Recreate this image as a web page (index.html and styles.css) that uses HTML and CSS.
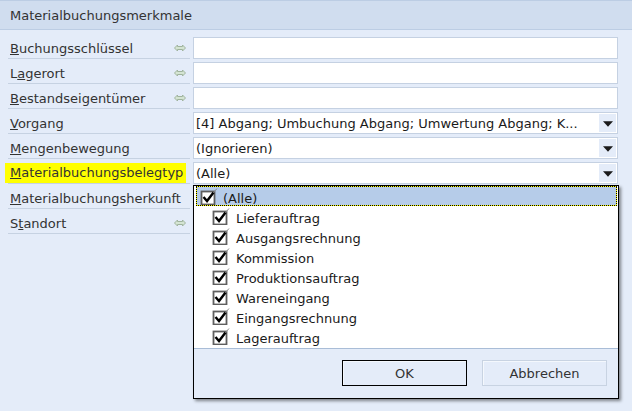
FILE: index.html
```html
<!DOCTYPE html>
<html lang="de">
<head>
<meta charset="utf-8">
<link rel="stylesheet" href="styles.css">
</head>
<body>
<div class="panel">
  <div class="header">Materialbuchungsmerkmale</div>
  <div class="form">
    <div class="lbl"><span><u>B</u>uchungsschlüssel</span><svg class="link" width="12" height="8" viewBox="0 0 12 8"><path d="M0.5 4 L3.5 1 L3.5 2.5 L8.5 2.5 L8.5 1 L11.5 4 L8.5 7 L8.5 5.5 L3.5 5.5 L3.5 7 Z" fill="#d4e4d2" stroke="#9fb39d" stroke-width="1"/></svg></div>
    <div class="field"></div>

    <div class="lbl"><span>L<u>a</u>gerort</span><svg class="link" width="12" height="8" viewBox="0 0 12 8"><path d="M0.5 4 L3.5 1 L3.5 2.5 L8.5 2.5 L8.5 1 L11.5 4 L8.5 7 L8.5 5.5 L3.5 5.5 L3.5 7 Z" fill="#d4e4d2" stroke="#9fb39d" stroke-width="1"/></svg></div>
    <div class="field"></div>

    <div class="lbl"><span><u>B</u>estandseigentümer</span><svg class="link" width="12" height="8" viewBox="0 0 12 8"><path d="M0.5 4 L3.5 1 L3.5 2.5 L8.5 2.5 L8.5 1 L11.5 4 L8.5 7 L8.5 5.5 L3.5 5.5 L3.5 7 Z" fill="#d4e4d2" stroke="#9fb39d" stroke-width="1"/></svg></div>
    <div class="field"></div>

    <div class="lbl"><span><u>V</u>organg</span></div>
    <div class="field select"><span class="val">[4] Abgang; Umbuchung Abgang; Umwertung Abgang; K...</span><span class="drop"><svg width="9" height="5" viewBox="0 0 9 5"><path d="M0 0 H9 L4.5 5 Z" fill="#1a1a1a"/></svg></span></div>

    <div class="lbl"><span><u>M</u>engenbewegung</span></div>
    <div class="field select"><span class="val">(Ignorieren)</span><span class="drop"><svg width="9" height="5" viewBox="0 0 9 5"><path d="M0 0 H9 L4.5 5 Z" fill="#1a1a1a"/></svg></span></div>

    <div class="lbl"><span class="hl"><u>M</u>aterialbuchungsbelegtyp</span></div>
    <div class="field select"><span class="val">(Alle)</span><span class="drop"><svg width="9" height="5" viewBox="0 0 9 5"><path d="M0 0 H9 L4.5 5 Z" fill="#1a1a1a"/></svg></span></div>

    <div class="lbl"><span><u>M</u>aterialbuchungsherkunft</span></div>
    <div class="field select"></div>

    <div class="lbl"><span>S<u>t</u>andort</span><svg class="link" width="12" height="8" viewBox="0 0 12 8"><path d="M0.5 4 L3.5 1 L3.5 2.5 L8.5 2.5 L8.5 1 L11.5 4 L8.5 7 L8.5 5.5 L3.5 5.5 L3.5 7 Z" fill="#d4e4d2" stroke="#9fb39d" stroke-width="1"/></svg></div>
    <div class="field"></div>
  </div>

  <div class="popup">
    <div class="list">
      <div class="item all"><svg class="cb" width="18" height="17" viewBox="0 0 18 17"><rect x="1.5" y="3.5" width="13" height="13" fill="#fff" stroke="#5e5e5e" stroke-width="1.8"/><path d="M3.5 9 L7 13 L13.5 4.5" fill="none" stroke="#000" stroke-width="2.4"/><path d="M13.5 4.5 L17 0.5" fill="none" stroke="#8a8a8a" stroke-width="1"/></svg><span>(Alle)</span></div>
      <div class="item"><svg class="cb" width="18" height="17" viewBox="0 0 18 17"><rect x="1.5" y="3.5" width="13" height="13" fill="#fff" stroke="#5e5e5e" stroke-width="1.8"/><path d="M3.5 9 L7 13 L13.5 4.5" fill="none" stroke="#000" stroke-width="2.4"/><path d="M13.5 4.5 L17 0.5" fill="none" stroke="#8a8a8a" stroke-width="1"/></svg><span>Lieferauftrag</span></div>
      <div class="item"><svg class="cb" width="18" height="17" viewBox="0 0 18 17"><rect x="1.5" y="3.5" width="13" height="13" fill="#fff" stroke="#5e5e5e" stroke-width="1.8"/><path d="M3.5 9 L7 13 L13.5 4.5" fill="none" stroke="#000" stroke-width="2.4"/><path d="M13.5 4.5 L17 0.5" fill="none" stroke="#8a8a8a" stroke-width="1"/></svg><span>Ausgangsrechnung</span></div>
      <div class="item"><svg class="cb" width="18" height="17" viewBox="0 0 18 17"><rect x="1.5" y="3.5" width="13" height="13" fill="#fff" stroke="#5e5e5e" stroke-width="1.8"/><path d="M3.5 9 L7 13 L13.5 4.5" fill="none" stroke="#000" stroke-width="2.4"/><path d="M13.5 4.5 L17 0.5" fill="none" stroke="#8a8a8a" stroke-width="1"/></svg><span>Kommission</span></div>
      <div class="item"><svg class="cb" width="18" height="17" viewBox="0 0 18 17"><rect x="1.5" y="3.5" width="13" height="13" fill="#fff" stroke="#5e5e5e" stroke-width="1.8"/><path d="M3.5 9 L7 13 L13.5 4.5" fill="none" stroke="#000" stroke-width="2.4"/><path d="M13.5 4.5 L17 0.5" fill="none" stroke="#8a8a8a" stroke-width="1"/></svg><span>Produktionsauftrag</span></div>
      <div class="item"><svg class="cb" width="18" height="17" viewBox="0 0 18 17"><rect x="1.5" y="3.5" width="13" height="13" fill="#fff" stroke="#5e5e5e" stroke-width="1.8"/><path d="M3.5 9 L7 13 L13.5 4.5" fill="none" stroke="#000" stroke-width="2.4"/><path d="M13.5 4.5 L17 0.5" fill="none" stroke="#8a8a8a" stroke-width="1"/></svg><span>Wareneingang</span></div>
      <div class="item"><svg class="cb" width="18" height="17" viewBox="0 0 18 17"><rect x="1.5" y="3.5" width="13" height="13" fill="#fff" stroke="#5e5e5e" stroke-width="1.8"/><path d="M3.5 9 L7 13 L13.5 4.5" fill="none" stroke="#000" stroke-width="2.4"/><path d="M13.5 4.5 L17 0.5" fill="none" stroke="#8a8a8a" stroke-width="1"/></svg><span>Eingangsrechnung</span></div>
      <div class="item"><svg class="cb" width="18" height="17" viewBox="0 0 18 17"><rect x="1.5" y="3.5" width="13" height="13" fill="#fff" stroke="#5e5e5e" stroke-width="1.8"/><path d="M3.5 9 L7 13 L13.5 4.5" fill="none" stroke="#000" stroke-width="2.4"/><path d="M13.5 4.5 L17 0.5" fill="none" stroke="#8a8a8a" stroke-width="1"/></svg><span>Lagerauftrag</span></div>
    </div>
    <div class="footer">
      <button class="btn default">OK</button>
      <button class="btn">Abbrechen</button>
    </div>
  </div>
</div>
</body>
</html>
```

FILE: styles.css
```css
* { box-sizing: border-box; }
html, body { margin: 0; padding: 0; }
body {
  width: 632px;
  height: 411px;
  background: #e4ecf9;
  font-family: "DejaVu Sans", Verdana, sans-serif;
  font-size: 13px;
  color: #333;
  overflow: hidden;
}
.panel { position: relative; height: 411px; }
.header {
  height: 30px;
  background: #d0ddef;
  border-top: 1px solid #bccde4;
  border-bottom: 1px solid #bccde4;
  padding-left: 10px;
  display: flex;
  align-items: center;
  color: #333;
}
.form {
  display: grid;
  grid-template-columns: 182px 425px;
  grid-auto-rows: 22px;
  column-gap: 3px;
  row-gap: 3px;
  padding: 7px 0 0 8px;
}
.lbl {
  display: flex;
  align-items: center;
  justify-content: space-between;
  border-bottom: 1px solid #c6d2e2;
  padding: 1px 4px 0 2px;
  white-space: nowrap;
}
.lbl u { text-decoration-thickness: 1px; text-underline-offset: 1px; }
.hl {
  background: #ffff00;
  margin-left: -5px;
  padding-left: 5px;
  width: 184px;
  height: 20px;
  line-height: 20px;
  margin-top: 0;
}
.link { display: block; }
.field {
  background: #fff;
  border: 1px solid #c5d1e2;
  display: flex;
  align-items: center;
  color: #1a1a1a;
  padding-top: 1px;
}
.val { flex: 1; padding-left: 2px; white-space: nowrap; overflow: hidden; }
.drop {
  width: 17px;
  height: 18px;
  margin-right: 1px;
  margin-top: -1px;
  background: #e4ecf9;
  display: flex;
  align-items: center;
  justify-content: center;
  padding-top: 2px;
}
.drop svg { display: block; width: 10px; height: 6px; }
.popup {
  position: absolute;
  left: 193px;
  top: 185px;
  width: 426px;
  height: 214px;
  border: 1px solid #000;
  background: #e4ecf9;
  box-shadow: 2px 2px 3px rgba(0,0,0,0.45);
  display: flex;
  flex-direction: column;
}
.list {
  background: #fff;
  padding: 0 1px 2px 2px;
  border-bottom: 1px solid #a9bdd7;
}
.item {
  height: 20px;
  display: flex;
  align-items: center;
  padding-left: 16px;
  gap: 6px;
  color: #1a1a1a;
  position: relative;
}
.item span { padding-top: 4px; }
.item.all {
  padding-left: 3px;
  gap: 5px;
  background: #b6cce9;
  border: 1px solid #ffff00;
}
.item.all::after {
  content: "";
  position: absolute;
  inset: -1px;
  border: 1px dotted #000;
}
.cb { display: block; flex: none; }
.footer {
  flex: 1;
  display: flex;
  justify-content: flex-end;
  gap: 15px;
  padding: 11px 11px 0 0;
}
.btn {
  width: 125px;
  height: 26px;
  font-family: "DejaVu Sans", Verdana, sans-serif;
  font-size: 13px;
  color: #333;
  background: #e4ecf9;
  border: 1px solid #c8d3e2;
  box-shadow: inset 1px 1px 0 #f4f8fd;
  padding: 0;
}
.btn.default { border-color: #000; }
```
